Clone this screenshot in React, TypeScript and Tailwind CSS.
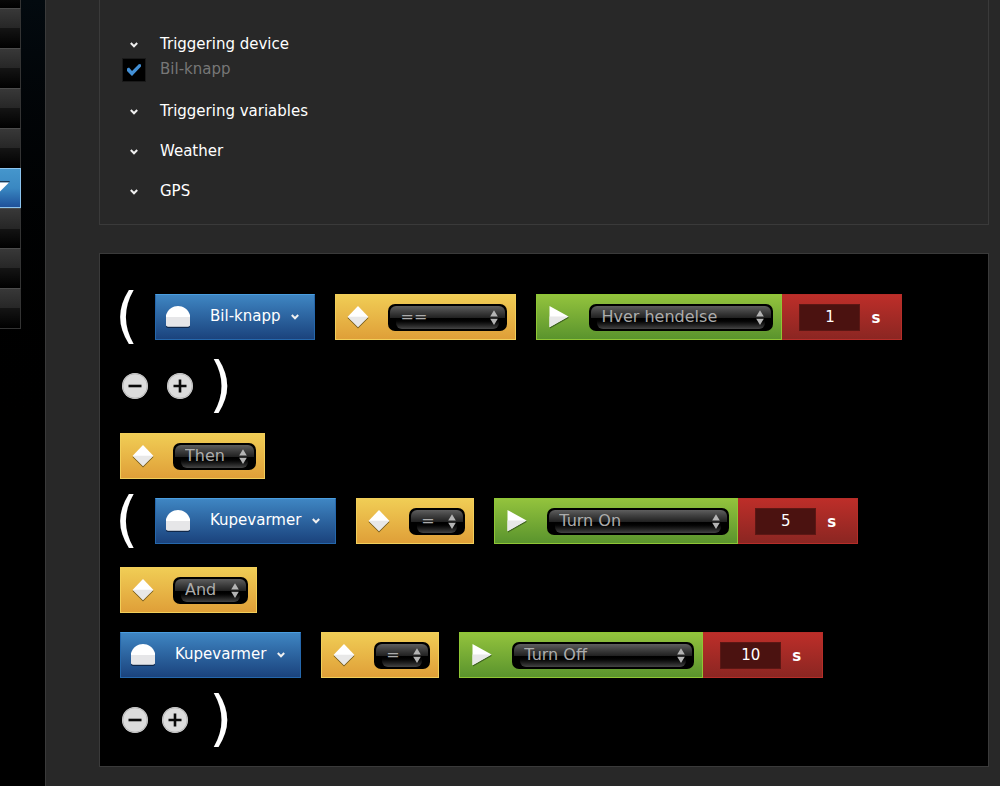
import { useState } from "react";

type Step = {
  device: string;
  operator: string;
  operatorWidth: string;
  action: string;
  actionWidth: string;
  seconds: string;
};

const MENU_ITEMS = ["a", "b", "c", "d", "e", "active", "g", "h", "i"];
const OPERATORS = ["==", "=", "!=", ">", "<"];
const JOINS = ["Then", "And", "Or"];
const ACTIONS = ["Hver hendelse", "Turn On", "Turn Off"];

const STEPS: Step[] = [
  {
    device: "Bil-knapp",
    operator: "==",
    operatorWidth: "w-[119px]",
    action: "Hver hendelse",
    actionWidth: "w-[184px]",
    seconds: "1",
  },
  {
    device: "Kupevarmer",
    operator: "=",
    operatorWidth: "w-[56px]",
    action: "Turn On",
    actionWidth: "w-[182px]",
    seconds: "5",
  },
  {
    device: "Kupevarmer",
    operator: "=",
    operatorWidth: "w-[56px]",
    action: "Turn Off",
    actionWidth: "w-[182px]",
    seconds: "10",
  },
];

function Chevron() {
  return (
    <svg width="8" height="6" viewBox="0 0 8 6" fill="none" className="shrink-0">
      <path d="M.8 1 4 4.3 7.2 1" stroke="#f0f0f0" strokeWidth="2" />
    </svg>
  );
}

function DomeIcon() {
  return (
    <svg width="26" height="24" viewBox="0 0 26 24" className="shrink-0">
      <path d="M1 11.5C3 5 8 2.5 13 2.5S23 5 25 11.5V21Q25 23 23 23H3Q1 23 1 21Z" fill="#10284a" />
      <path d="M1 10C3 4 8 1 13 1S23 4 25 10V19.5Q25 21.5 23 21.5H3Q1 21.5 1 19.5Z" fill="#fff" />
      <path d="M1 12H25V19.5Q25 21.5 23 21.5H3Q1 21.5 1 19.5Z" fill="#e6e6e8" />
    </svg>
  );
}

function DiamondIcon() {
  return (
    <svg width="24" height="24" viewBox="0 0 24 24" className="shrink-0">
      <path d="M12 2.5 22.5 13 12 23.5 1.5 13Z" fill="#7b6226" />
      <path d="M12 1 22.3 11.7 12 22 1.7 11.7Z" fill="#fff" />
      <path d="M1.7 11.7H22.3L12 22Z" fill="#e8e8e8" />
    </svg>
  );
}

function PlayIcon() {
  return (
    <svg width="20" height="24" viewBox="0 0 20 24" className="shrink-0">
      <path d="M1 2.5 20 12.8 1 23.6Z" fill="#3f6420" />
      <path d="M.5 1 19.5 11.6.5 22.2Z" fill="#fff" />
      <path d="M.5 11.6H19.5L.5 22.2Z" fill="#e8e8e8" />
    </svg>
  );
}

function GlossySelect({
  label,
  value,
  options,
  width,
}: {
  label: string;
  value: string;
  options: string[];
  width: string;
}) {
  return (
    <div className={`relative h-[27px] rounded-[7px] bg-black ${width}`}>
      <div className="absolute inset-x-[2px] top-[2px] h-3 rounded-t-[6px] bg-linear-to-b from-[#5e5e5e] to-[#202020]" />
      <div className="absolute inset-x-2 top-[14px] h-[11px] rounded-b-[6px] bg-linear-to-b from-black to-[#454545]" />
      <select
        aria-label={label}
        defaultValue={value}
        className="relative block h-full w-full appearance-none bg-transparent pb-px pl-3 text-base leading-5 text-[#acacac] outline-none"
      >
        {options.map((o) => (
          <option key={o} className="bg-black">
            {o}
          </option>
        ))}
      </select>
      <svg width="8" height="16" viewBox="0 0 8 16" className="pointer-events-none absolute top-[6px] right-[9px]">
        <path d="M4 .2 7.8 6.5H.2ZM4 15 7.8 8.7H.2Z" fill="#b4b4b4" />
      </svg>
    </div>
  );
}

function JoinBlock({
  label,
  value,
  options,
  width,
}: {
  label: string;
  value: string;
  options: string[];
  width: string;
}) {
  return (
    <div className="flex h-[46px] items-center gap-[18px] border border-[#f1ce5a] bg-linear-to-b from-[#f0cd55] to-[#df9f38] pr-2 pl-[10px]">
      <DiamondIcon />
      <GlossySelect label={label} value={value} options={options} width={width} />
    </div>
  );
}

function StepBlocks({ step }: { step: Step }) {
  return (
    <div className="flex gap-5">
      <button className="flex h-[46px] items-center border border-[#2567ab] border-t-[#4a9ee0] bg-linear-to-b from-[#3f86c3] to-[#1b437d] pr-[15px] pl-[9px]">
        <DomeIcon />
        <span className="ml-[19px] pb-[2px] text-[15px] leading-5 text-white">{step.device}</span>
        <span className="ml-[11px]">
          <Chevron />
        </span>
      </button>
      <JoinBlock label="Operator" value={step.operator} options={OPERATORS} width={step.operatorWidth} />
      <div className="flex">
        <div className="flex h-[46px] items-center gap-5 border border-[#8fc635] bg-linear-to-b from-[#93c33d] to-[#5a942d] pr-2 pl-3">
          <PlayIcon />
          <GlossySelect label="Action" value={step.action} options={ACTIONS} width={step.actionWidth} />
        </div>
        <label className="flex h-[46px] w-[120px] items-center gap-[11px] border border-l-0 border-[#b52d29] bg-linear-to-b from-[#bd2e29] to-[#8b2622] pl-[17px] text-[15px] text-white">
          <input
            type="text"
            defaultValue={step.seconds}
            className="h-[27px] w-[61px] border border-[#5c1714] bg-[#4b1210] text-center outline-none"
          />
          <span className="pt-[2px] leading-5 font-bold">s</span>
        </label>
      </div>
    </div>
  );
}

function Paren({ children }: { children: string }) {
  return <span className="block h-[54px] text-[60px] leading-[50px] text-white">{children}</span>;
}

function RoundButton({ kind }: { kind: "minus" | "plus" }) {
  return (
    <button aria-label={kind === "plus" ? "Add" : "Remove"} className="size-[26px] rounded-full bg-[#dcdcdc]">
      <svg width="26" height="26" viewBox="0 0 26 26" fill="none">
        <circle cx="13" cy="13" r="12.2" stroke="#b9b9b9" strokeWidth="1" />
        <path d={kind === "plus" ? "M6.5 13H19.5M13 6.5V19.5" : "M6.5 13H19.5"} stroke="#0a0a0a" strokeWidth="2.6" />
      </svg>
    </button>
  );
}

function OpenRow({ step }: { step: Step }) {
  return (
    <div className="flex items-center">
      <div className="-ml-[5px] w-10">
        <Paren>(</Paren>
      </div>
      <StepBlocks step={step} />
    </div>
  );
}

function CloseRow({ gap }: { gap: string }) {
  return (
    <div className="mt-[15px] flex items-center">
      <div className={`flex w-[89px] pl-[2px] ${gap}`}>
        <RoundButton kind="minus" />
        <RoundButton kind="plus" />
      </div>
      <Paren>)</Paren>
    </div>
  );
}

function SectionToggle({ title }: { title: string }) {
  return (
    <button className="flex h-5 items-center gap-[14px] text-[15px] leading-5 text-white">
      <span className="flex w-6 justify-center pt-[2px]">
        <Chevron />
      </span>
      {title}
    </button>
  );
}

function SideMenu() {
  return (
    <nav className="w-[21px] shrink-0 overflow-hidden">
      <div className="-mt-8 border-b border-[#333]">
        {MENU_ITEMS.map((item) =>
          item === "active" ? (
            <a
              key={item}
              href="#"
              aria-label="Current page"
              className="block h-10 border border-l-0 border-[#8cc4ee] bg-linear-to-b from-[#4596cc] via-[#3a88c2] via-50% to-[#1f519a]"
            >
              <svg width="12" height="38" viewBox="0 0 12 38">
                <path d="M0 12H10L9 13.5H0Z" fill="#1c3a55" />
                <path d="M0 13.5H9L0 22.5Z" fill="#fff" />
              </svg>
            </a>
          ) : (
            <a
              key={item}
              href="#"
              aria-label="Menu item"
              className="block h-10 border-t border-r border-t-[#4c4c4c] border-r-[#333] bg-[linear-gradient(#383838,#262626_50%,#141414_50%,#000)]"
            />
          )
        )}
      </div>
    </nav>
  );
}

export default function App() {
  const [checked, setChecked] = useState(true);

  return (
    <div className="flex min-h-screen bg-linear-to-b from-[#030a0f] via-black via-60% to-black font-['DejaVu_Sans',Verdana,sans-serif]">
      <SideMenu />
      <main className="ml-6 flex-1 border-l border-[#3a3a3a] bg-[#282828] pr-[11px] pb-[19px] pl-[53px]">
        <section className="border border-t-0 border-[#3a3a3a] px-[22px] pt-[34px] pb-[23px]">
          <SectionToggle title="Triggering device" />
          <label className="mt-1 flex items-center gap-[14px] text-[15px] leading-5 text-[#777]">
            <span className="relative block size-6">
              <input
                type="checkbox"
                checked={checked}
                onChange={(e) => setChecked(e.target.checked)}
                className="block size-6 appearance-none border border-[#1a1a1a] bg-black"
              />
              {checked && (
                <svg width="16" height="14" viewBox="0 0 16 14" className="pointer-events-none absolute top-[5px] left-1">
                  <path d="M1 5.5 3 4.5 6 8 13 1 15 1.5V3.5L6 13 1 8Z" fill="#4390d6" />
                </svg>
              )}
            </span>
            <span className="pb-[2px]">Bil-knapp</span>
          </label>
          <div className="mt-[19px] flex flex-col items-start gap-5">
            <SectionToggle title="Triggering variables" />
            <SectionToggle title="Weather" />
            <SectionToggle title="GPS" />
          </div>
        </section>

        <section className="mt-7 border border-[#3a3a3a] bg-black px-5 pt-9 pb-[19px]">
          <OpenRow step={STEPS[0]} />
          <CloseRow gap="gap-[19px]" />
          <div className="mt-5 flex">
            <JoinBlock label="Join" value="Then" options={JOINS} width="w-[83px]" />
          </div>
          <div className="mt-[15px]">
            <OpenRow step={STEPS[1]} />
          </div>
          <div className="mt-[19px] flex">
            <JoinBlock label="Join" value="And" options={JOINS} width="w-[75px]" />
          </div>
          <div className="mt-[19px]">
            <StepBlocks step={STEPS[2]} />
          </div>
          <CloseRow gap="gap-[14px]" />
        </section>
      </main>
    </div>
  );
}
